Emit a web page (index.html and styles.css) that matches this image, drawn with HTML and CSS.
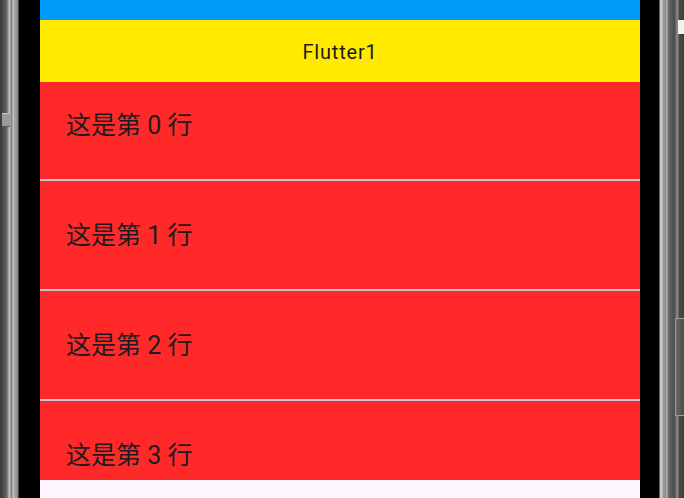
FILE: index.html
```html
<!DOCTYPE html>
<html lang="zh">
<head>
<meta charset="utf-8">
<title>Flutter1</title>
<link rel="stylesheet" href="styles.css">
</head>
<body>
<div class="device">
  <div class="frame frame-left"><span class="side-key side-key-left"></span></div>
  <div class="bezel bezel-left"></div>
  <main class="screen">
    <div class="status-bar"></div>
    <header class="app-bar">Flutter1</header>
    <section class="list">
      <div class="list-inner">
        <div class="row">这是第 0 行</div>
        <div class="row">这是第 1 行</div>
        <div class="row">这是第 2 行</div>
        <div class="row">这是第 3 行</div>
      </div>
    </section>
    <div class="surface"></div>
  </main>
  <div class="bezel bezel-right"></div>
  <div class="frame frame-right"><span class="side-key side-key-right"></span><span class="corner-glint"></span></div>
</div>
</body>
</html>
```

FILE: styles.css
```css
html, body {
  margin: 0;
  padding: 0;
  background: #000;
}

.device {
  display: flex;
  width: 684px;
  height: 498px;
  overflow: hidden;
}

.frame {
  position: relative;
  flex: none;
  height: 100%;
}

.frame-left {
  width: 19px;
  background: linear-gradient(to right,
    #3a3a3a 0px, #4a4a4a 3px, #6a6a6a 7px, #b8b8b8 9px, #c4c4c4 10px,
    #7a7a7a 11px, #8a8a8a 12px, #d0d0d0 13px, #a8a8a8 14px,
    #9a9a9a 17px, #6a6a6a 18px, #2a2a2a 19px);
}

.frame-right {
  width: 25px;
  background: linear-gradient(to right,
    #1a1a1a 0px, #bdbdbd 1px, #cfcfcf 3px, #9a9a9a 4px, #8c8c8c 7px,
    #c8c8c8 8px, #6c6c6c 9px, #555 13px, #4e4e4e 16px,
    #7a7a7a 17px, #8a8a8a 19px, #4a4a4a 20px, #3e3e3e 25px);
}

.side-key {
  position: absolute;
  display: block;
}

.side-key-left {
  left: 2px;
  top: 113px;
  width: 8px;
  height: 12px;
  background: #9a9a9a;
  border-top: 1px solid #c4c4c4;
  border-bottom: 1px solid #5a5a5a;
}

.side-key-right {
  right: 0;
  top: 318px;
  width: 8px;
  height: 96px;
  border: 1px solid #9e9e9e;
  border-right: none;
  background: linear-gradient(to right, #6a6a6a, #4a4a4a);
}

.corner-glint {
  position: absolute;
  right: 0;
  top: 20px;
  width: 6px;
  height: 14px;
  background: #f2f2f2;
}

.bezel {
  flex: none;
  height: 100%;
  background: #000;
}

.bezel-left { width: 21px; }
.bezel-right { width: 19px; }

.screen {
  flex: none;
  width: 600px;
  height: 100%;
  display: flex;
  flex-direction: column;
  font-family: "Roboto", "Noto Sans CJK SC", sans-serif;
}

.status-bar {
  flex: none;
  height: 20px;
  background: #0099f8;
}

.app-bar {
  flex: none;
  height: 62px;
  display: flex;
  align-items: center;
  justify-content: center;
  background: #ffea00;
  color: #1d1b20;
  font-size: 20px;
  letter-spacing: 0.8px;
  line-height: 24px;
  padding-top: 1px;
  box-sizing: border-box;
}

.list {
  flex: none;
  height: 398px;
  overflow: hidden;
  background: #ff2929;
}

.list-inner {
  margin-top: -11px;
}

.row {
  display: flex;
  align-items: center;
  padding-left: 26px;
  padding-top: 1px;
  height: 107px;
  border-bottom: 2px solid #cdc6cf;
  color: #1d1b20;
  font-family: "Roboto", "Noto Sans CJK SC", sans-serif;
  font-size: 25px;
  line-height: 25px;
}

.surface {
  flex: 1;
  background: #fef7ff;
}
```
